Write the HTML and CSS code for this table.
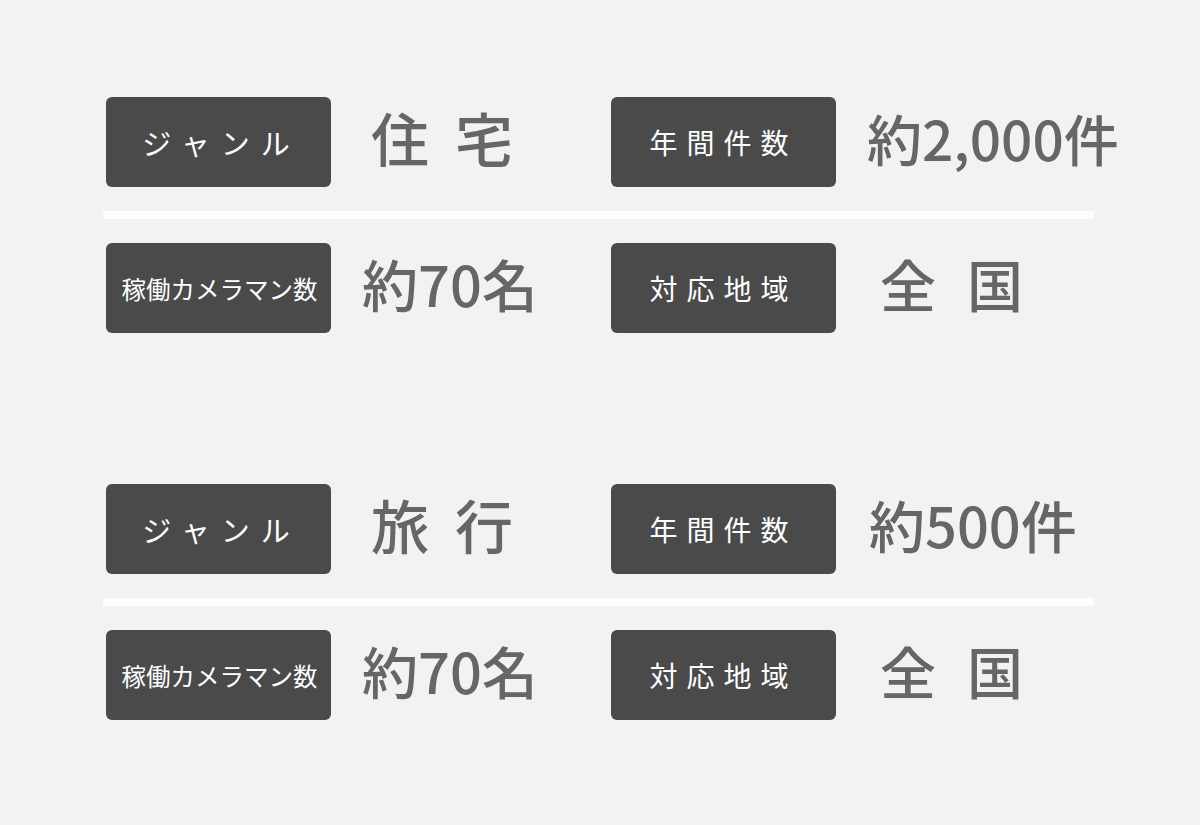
FILE: index.html
```html
<!DOCTYPE html>
<html lang="ja">
<head>
<meta charset="utf-8">
<title>実績</title>
<link rel="stylesheet" href="styles.css">
</head>
<body>
<main class="page">
  <section class="group">
    <div class="row">
      <div class="cell">
        <div class="label label--spaced label--genre">ジャンル</div>
        <div class="value value--genre">住宅</div>
      </div>
      <div class="cell">
        <div class="label label--spaced">年間件数</div>
        <div class="value value--count">約2,000件</div>
      </div>
    </div>
    <div class="divider"></div>
    <div class="row">
      <div class="cell">
        <div class="label label--small">稼働カメラマン数</div>
        <div class="value value--staff">約70名</div>
      </div>
      <div class="cell">
        <div class="label label--spaced">対応地域</div>
        <div class="value value--area">全国</div>
      </div>
    </div>
  </section>
  <section class="group">
    <div class="row">
      <div class="cell">
        <div class="label label--spaced label--genre">ジャンル</div>
        <div class="value value--genre">旅行</div>
      </div>
      <div class="cell">
        <div class="label label--spaced">年間件数</div>
        <div class="value value--count2">約500件</div>
      </div>
    </div>
    <div class="divider"></div>
    <div class="row">
      <div class="cell">
        <div class="label label--small">稼働カメラマン数</div>
        <div class="value value--staff">約70名</div>
      </div>
      <div class="cell">
        <div class="label label--spaced">対応地域</div>
        <div class="value value--area">全国</div>
      </div>
    </div>
  </section>
</main>
</body>
</html>
```

FILE: styles.css
```css
html, body {
  margin: 0;
  padding: 0;
}

body {
  background: #f3f1f2;
  font-family: "Noto Sans CJK JP", "Noto Sans", sans-serif;
  width: 1200px;
  height: 825px;
  overflow: hidden;
}

.page {
  padding: 97px 0 0 106px;
}

.group + .group {
  margin-top: 151px;
}

.row {
  display: flex;
  height: 90px;
}

.cell {
  width: 505px;
  display: flex;
  align-items: center;
}

.label {
  width: 225px;
  height: 90px;
  flex: none;
  background: #4a4a4a;
  border-radius: 6px;
  color: #ffffff;
  display: flex;
  align-items: center;
  justify-content: center;
  font-weight: 400;
}

.label--spaced {
  font-size: 28px;
  letter-spacing: 9px;
}

.label--genre {
  font-size: 29px;
  letter-spacing: 11px;
  padding-left: 6px;
  box-sizing: border-box;
}

.label--small {
  font-size: 24.5px;
  letter-spacing: 0;
  padding-left: 2px;
  box-sizing: border-box;
}

.value {
  color: #666666;
  font-size: 56px;
  font-weight: 500;
  line-height: 1;
  white-space: nowrap;
  margin-bottom: 10px;
}

.value--genre {
  margin-left: 40px;
  font-size: 58px;
  letter-spacing: 26px;
}

.value--staff {
  margin-left: 31px;
  letter-spacing: 0;
}

.value--count {
  margin-left: 31px;
  font-size: 55px;
}

.value--count2 {
  margin-left: 33px;
}

.value--area {
  margin-left: 44px;
  letter-spacing: 31px;
}

.divider {
  height: 8px;
  width: 991px;
  margin: 24px 0 24px -3px;
  background: #fdfdfd;
}
```
